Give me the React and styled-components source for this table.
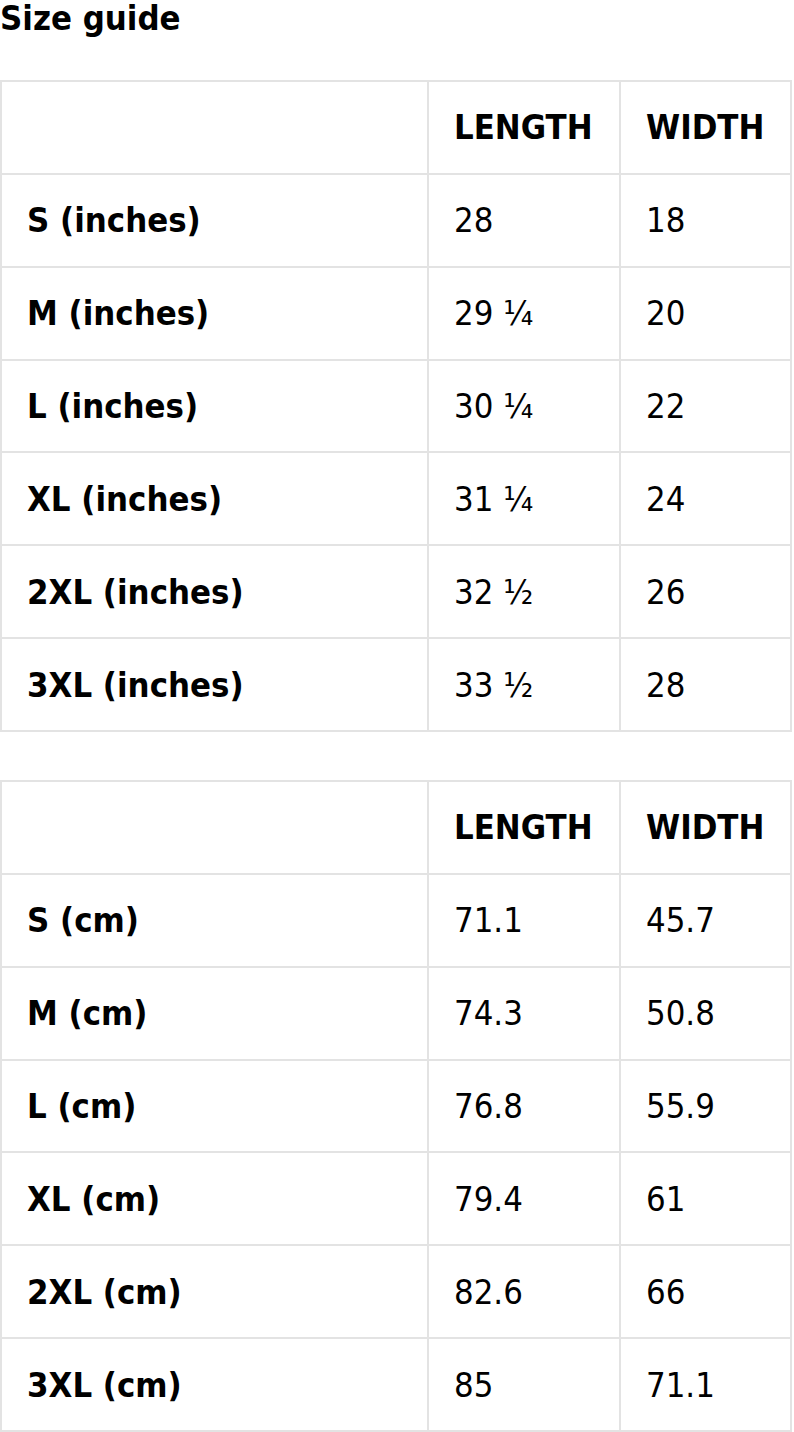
import React from "react";
import styled, { createGlobalStyle } from "styled-components";

const GlobalStyle = createGlobalStyle`
  html, body {
    margin: 0;
    padding: 0;
    background: #ffffff;
  }
  body {
    font-family: "DejaVu Sans Condensed", "DejaVu Sans", "Noto Sans", sans-serif;
    color: #000000;
  }
`;

const Page = styled.main`
  width: 794px;
  display: flex;
  flex-direction: column;
`;

const Title = styled.h2`
  margin: 0 0 44px 0;
  font-size: 34.4px;
  line-height: 36px;
  font-weight: 700;
  color: #000;
`;

const Table = styled.table`
  width: 792px;
  table-layout: fixed;
  border-collapse: separate;
  border-spacing: 0;
  border-top: 2px solid #e3e3e3;
  border-left: 2px solid #e3e3e3;
  margin-bottom: ${(p) => p.$gap || 0}px;
`;

const Cell = styled.td`
  height: 92.86px;
  padding: 0 0 0 25px;
  box-sizing: border-box;
  border-right: 2px solid #e3e3e3;
  border-bottom: 2px solid #e3e3e3;
  font-size: 34.4px;
  line-height: 40px;
  font-weight: ${(p) => (p.$bold ? 700 : 400)};
  vertical-align: middle;
  white-space: nowrap;
  color: #000;
`;

const Col = styled.col`
  width: ${(p) => p.$w}px;
`;

const inches = [
  ["S (inches)", "28", "18"],
  ["M (inches)", "29 ¼", "20"],
  ["L (inches)", "30 ¼", "22"],
  ["XL (inches)", "31 ¼", "24"],
  ["2XL (inches)", "32 ½", "26"],
  ["3XL (inches)", "33 ½", "28"],
];

const cm = [
  ["S (cm)", "71.1", "45.7"],
  ["M (cm)", "74.3", "50.8"],
  ["L (cm)", "76.8", "55.9"],
  ["XL (cm)", "79.4", "61"],
  ["2XL (cm)", "82.6", "66"],
  ["3XL (cm)", "85", "71.1"],
];

function SizeTable({ rows, gap }) {
  return (
    <Table $gap={gap}>
      <colgroup>
        <Col $w={427} />
        <Col $w={192} />
        <Col $w={171} />
      </colgroup>
      <tbody>
        <tr>
          <Cell $bold />
          <Cell $bold>LENGTH</Cell>
          <Cell $bold>WIDTH</Cell>
        </tr>
        {rows.map(([label, len, wid]) => (
          <tr key={label}>
            <Cell $bold>{label}</Cell>
            <Cell>{len}</Cell>
            <Cell>{wid}</Cell>
          </tr>
        ))}
      </tbody>
    </Table>
  );
}

export default function App() {
  return (
    <>
      <GlobalStyle />
      <Page>
        <Title>Size guide</Title>
        <SizeTable rows={inches} gap={48} />
        <SizeTable rows={cm} />
      </Page>
    </>
  );
}
